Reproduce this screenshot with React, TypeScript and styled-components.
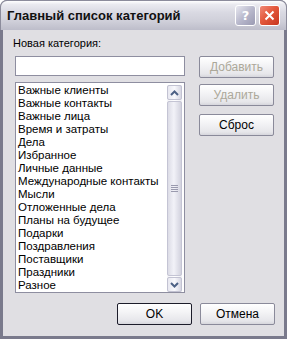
import { createGlobalStyle, styled } from 'styled-components';

const GlobalStyle = createGlobalStyle`
  html, body {
    margin: 0;
    padding: 0;
    background: #ffffff;
  }
  body {
    width: 287px;
    height: 339px;
    overflow: hidden;
  }
`;

const categories = [
  'Важные клиенты',
  'Важные контакты',
  'Важные лица',
  'Время и затраты',
  'Дела',
  'Избранное',
  'Личные данные',
  'Международные контакты',
  'Мысли',
  'Отложенные дела',
  'Планы на будущее',
  'Подарки',
  'Поздравления',
  'Поставщики',
  'Праздники',
  'Разное',
];

const Window = styled.div`
  width: 287px;
  height: 339px;
  box-sizing: border-box;
  display: flex;
  flex-direction: column;
  background: #7a7a8c;
  border-radius: 7px 7px 0 0;
  padding: 0 3px 3px 3px;
  font-family: 'Liberation Sans', Arial, sans-serif;
  font-size: 11px;
  color: #000000;
`;

const TitleBar = styled.div`
  height: 29px;
  margin: 0 -3px;
  display: flex;
  align-items: center;
  padding: 0 6px 0 6px;
  border-radius: 7px 7px 0 0;
  border: 1px solid #8c8c9c;
  border-bottom: none;
  background: linear-gradient(
    #ffffff 0%,
    #eaeaf0 12%,
    #d9d9e2 40%,
    #cfcfd9 70%,
    #bdbdca 100%
  );
`;

const Title = styled.span`
  flex: 1;
  font-family: 'Liberation Sans', Arial, sans-serif;
  font-weight: bold;
  font-size: 13px;
  color: #111111;
`;

const CaptionButton = styled.div<{ $danger?: boolean }>`
  width: 19px;
  height: 19px;
  margin-left: 3px;
  border: 1px solid #ffffff;
  border-radius: 3px;
  display: flex;
  align-items: center;
  justify-content: center;
  background: ${(p) =>
    p.$danger
      ? 'linear-gradient(135deg, #f08a78 0%, #e3583c 45%, #c8351e 100%)'
      : 'linear-gradient(135deg, #e8e8f0 0%, #b8b8cc 50%, #9a9ab2 100%)'};
  color: #ffffff;
  font-family: 'DejaVu Sans', sans-serif;
  font-weight: bold;
  font-size: 13px;
`;

const Body = styled.div`
  flex: 1;
  display: flex;
  flex-direction: column;
  background: #e0dfe3;
  padding: 7px 9px 0 12px;
`;

const Main = styled.div`
  display: flex;
  gap: 14px;
`;

const LeftColumn = styled.div`
  width: 170px;
  display: flex;
  flex-direction: column;
`;

const Label = styled.div`
  height: 13px;
  line-height: 13px;
  margin-left: -2px;
`;

const Input = styled.div`
  height: 18px;
  margin-top: 6px;
  background: #ffffff;
  border: 1px solid #8e8ea0;
`;

const ListBox = styled.div`
  height: 209px;
  margin-top: 6px;
  display: flex;
  background: #ffffff;
  border: 1px solid #8e8ea0;
  overflow: hidden;
`;

const Items = styled.div`
  flex: 1;
  padding: 1px 0 0 2px;
`;

const Item = styled.div`
  height: 13px;
  line-height: 13px;
  white-space: nowrap;
  font-size: 11.5px;
`;

const ScrollBar = styled.div`
  width: 15px;
  margin: 2px 2px 0 0;
  display: flex;
  flex-direction: column;
  background: linear-gradient(90deg, #f3f3f7, #fdfdff 50%, #eeeef3);
`;

const ScrollButton = styled.div`
  height: 15px;
  box-sizing: border-box;
  border: 1px solid #c2c2d2;
  border-radius: 2px;
  background: linear-gradient(90deg, #e8e8f0, #f8f8fc 50%, #d6d6e2);
  display: flex;
  align-items: center;
  justify-content: center;
`;

const Thumb = styled.div`
  flex: 1;
  margin: 1px 0;
  box-sizing: border-box;
  border: 1px solid #c4c4d4;
  border-radius: 2px;
  background: linear-gradient(90deg, #dcdce6, #f2f2f8 45%, #d2d2de);
  display: flex;
  flex-direction: column;
  align-items: center;
  justify-content: center;
  gap: 1px;
`;

const Grip = styled.div`
  width: 7px;
  height: 1px;
  background: #9a9aae;
`;

const RightColumn = styled.div`
  display: flex;
  flex-direction: column;
  padding-top: 19px;
`;

const Button = styled.div<{ $disabled?: boolean; $default?: boolean; $gap?: number }>`
  width: 75px;
  height: 22px;
  margin-top: ${(p) => p.$gap ?? 0}px;
  box-sizing: border-box;
  display: flex;
  align-items: center;
  justify-content: center;
  border: 1px solid ${(p) => (p.$default ? '#1c1c2a' : '#8a8a9a')};
  border-radius: 2px;
  background: linear-gradient(#ffffff 0%, #f4f4f6 40%, #e6e6ea 85%, #d6d6dc 100%);
  color: ${(p) => (p.$disabled ? '#aca899' : '#000000')};
  font-size: 12px;
`;

const Footer = styled.div`
  display: flex;
  justify-content: flex-end;
  gap: 8px;
  margin-top: 10px;
`;

const Chevron: React.FC<{ up?: boolean }> = ({ up }) => (
  <svg width="9" height="6" viewBox="0 0 9 6">
    <path
      d={up ? 'M1 5 L4.5 1.5 L8 5' : 'M1 1 L4.5 4.5 L8 1'}
      fill="none"
      stroke="#4d6185"
      strokeWidth="2"
    />
  </svg>
);

const App: React.FC = () => {
  return (
    <>
      <GlobalStyle />
      <Window>
        <TitleBar>
          <Title>Главный список категорий</Title>
          <CaptionButton>?</CaptionButton>
          <CaptionButton $danger>
            <svg width="11" height="11" viewBox="0 0 11 11">
              <path d="M1.5 1.5 L9.5 9.5 M9.5 1.5 L1.5 9.5" stroke="#ffffff" strokeWidth="2" />
            </svg>
          </CaptionButton>
        </TitleBar>
        <Body>
          <Main>
            <LeftColumn>
              <Label>Новая категория:</Label>
              <Input />
              <ListBox>
                <Items>
                  {categories.map((c) => (
                    <Item key={c}>{c}</Item>
                  ))}
                </Items>
                <ScrollBar>
                  <ScrollButton>
                    <Chevron up />
                  </ScrollButton>
                  <Thumb>
                    <Grip />
                    <Grip />
                    <Grip />
                    <Grip />
                  </Thumb>
                  <ScrollButton>
                    <Chevron />
                  </ScrollButton>
                </ScrollBar>
              </ListBox>
            </LeftColumn>
            <RightColumn>
              <Button $disabled>Добавить</Button>
              <Button $disabled $gap={6}>
                Удалить
              </Button>
              <Button $gap={8}>Сброс</Button>
            </RightColumn>
          </Main>
          <Footer>
            <Button $default>OK</Button>
            <Button>Отмена</Button>
          </Footer>
        </Body>
      </Window>
    </>
  );
};

export default App;
